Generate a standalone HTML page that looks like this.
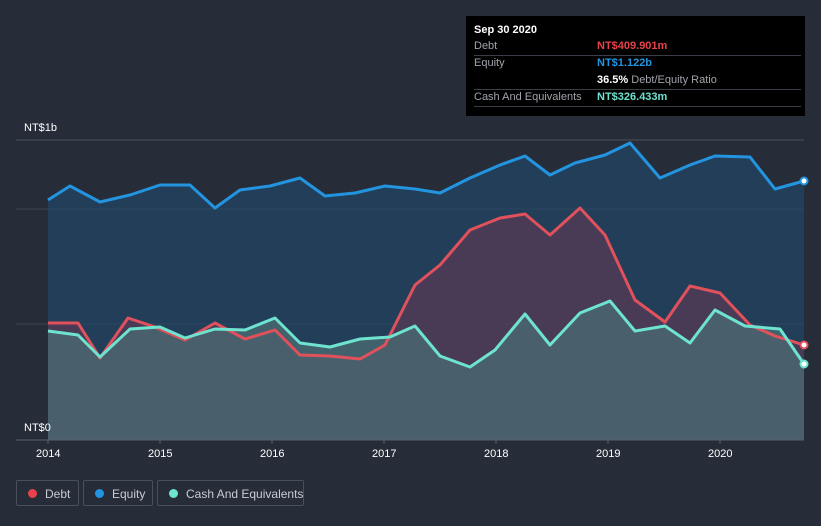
<!DOCTYPE html>
<html><head><meta charset="utf-8"><style>
html,body{margin:0;width:821px;height:526px;overflow:hidden}
body{background:#262d38;font-family:"Liberation Sans",sans-serif;position:relative}
.tt{position:absolute;left:466px;top:16px;width:339px;height:100px;background:#000;color:#fff;font-size:11px}
.tt .r{position:absolute;left:8px;right:4px;border-bottom:1px solid #3a3f47;height:17px;line-height:17px}
.tt .l{color:#a0a4aa;position:absolute;left:0}
.tt .v{position:absolute;left:123px;font-weight:bold;white-space:nowrap}
.leg{position:absolute;top:480px;height:26px;border:1px solid #4a505a;border-radius:2px;color:#c8ccd2;font-size:12px;line-height:26px;box-sizing:border-box;white-space:nowrap}
.leg i{position:absolute;left:11px;top:8px;width:9px;height:9px;border-radius:50%}
.leg span{position:absolute;left:28px}
.ax{position:absolute;color:#fff;font-size:11px}
</style></head><body>
<svg width="821" height="526" style="position:absolute;left:0;top:0">
<line x1="16" y1="140" x2="804" y2="140" stroke="#4a515c"/>
<line x1="16" y1="209" x2="804" y2="209" stroke="#3a424e"/>
<line x1="16" y1="324" x2="804" y2="324" stroke="#3a424e"/>
<polygon fill="#1f4a6e" fill-opacity="0.6" points="48,440 48,200 70,186 100,202 130,195 160,185 190,185 215,208 240,190 270,186 300,178 325,196 355,193 385,186 415,189 440,193 470,178 500,165 525,156 550,175 575,163 605,155 630,143 660,178 690,165 715,156 750,157 775,189 804,181 804,440"/>
<polygon fill="#5a3a55" fill-opacity="0.7" points="48,440 48,323 78,323 100,358 128,318 155,327 185,340 215,323 245,339 275,330 300,355 330,356 360,359 385,345 415,285 440,265 470,230 500,218 525,214 550,235 580,208 605,235 635,300 665,322 690,286 720,293 750,325 775,336 804,345 804,440"/>
<polygon fill="#4a6a72" fill-opacity="0.8" points="48,440 48,331 78,335 100,357 130,329 160,327 185,338 215,329 245,330 275,318 300,343 330,347 360,339 390,337 415,326 440,356 470,367 495,350 525,314 550,345 580,313 610,301 635,331 665,326 690,343 715,310 745,326 780,329 804,364 804,440"/>
<g fill="none" stroke-width="3" stroke-linejoin="round">
<polyline stroke="#2394df" points="48,200 70,186 100,202 130,195 160,185 190,185 215,208 240,190 270,186 300,178 325,196 355,193 385,186 415,189 440,193 470,178 500,165 525,156 550,175 575,163 605,155 630,143 660,178 690,165 715,156 750,157 775,189 804,181"/>
<polyline stroke="#e0515c" points="48,323 78,323 100,358 128,318 155,327 185,340 215,323 245,339 275,330 300,355 330,356 360,359 385,345 415,285 440,265 470,230 500,218 525,214 550,235 580,208 605,235 635,300 665,322 690,286 720,293 750,325 775,336 804,345"/>
<polyline stroke="#6ee3d0" points="48,331 78,335 100,357 130,329 160,327 185,338 215,329 245,330 275,318 300,343 330,347 360,339 390,337 415,326 440,356 470,367 495,350 525,314 550,345 580,313 610,301 635,331 665,326 690,343 715,310 745,326 780,329 804,364"/>
</g>
<circle cx="804" cy="181" r="3.5" fill="#fff" stroke="#2394df" stroke-width="2"/>
<circle cx="804" cy="345" r="3.5" fill="#fff" stroke="#e0515c" stroke-width="2"/>
<circle cx="804" cy="364" r="3.5" fill="#fff" stroke="#6ee3d0" stroke-width="2"/>
<line x1="16" y1="440" x2="804" y2="440" stroke="#5a616c"/>
<g stroke="#5a616c"><line x1="48" y1="440" x2="48" y2="444"/><line x1="160" y1="440" x2="160" y2="444"/><line x1="272" y1="440" x2="272" y2="444"/><line x1="384" y1="440" x2="384" y2="444"/><line x1="496" y1="440" x2="496" y2="444"/><line x1="608" y1="440" x2="608" y2="444"/><line x1="720" y1="440" x2="720" y2="444"/></g>
</svg>
<div class="ax" style="left:24px;top:122px">NT$1b</div>
<div class="ax" style="left:24px;top:422px">NT$0</div>
<div class="ax" style="left:36px;top:448px">2014</div>
<div class="ax" style="left:148px;top:448px">2015</div>
<div class="ax" style="left:260px;top:448px">2016</div>
<div class="ax" style="left:372px;top:448px">2017</div>
<div class="ax" style="left:484px;top:448px">2018</div>
<div class="ax" style="left:596px;top:448px">2019</div>
<div class="ax" style="left:708px;top:448px">2020</div>
<div class="tt">
<div style="position:absolute;left:8px;top:8px;font-weight:bold">Sep 30 2020</div>
<div class="r" style="top:22px"><span class="l">Debt</span><span class="v" style="color:#e8424a">NT$409.901m</span></div>
<div class="r" style="top:39px;border:none"><span class="l">Equity</span><span class="v" style="color:#2394df">NT$1.122b</span></div>
<div class="r" style="top:56px"><span class="v" style="color:#fff">36.5% <span style="font-weight:normal;color:#a0a4aa">Debt/Equity Ratio</span></span></div>
<div class="r" style="top:73px"><span class="l">Cash And Equivalents</span><span class="v" style="color:#6ee3d0">NT$326.433m</span></div>
</div>
<div class="leg" style="left:16px;width:63px"><i style="background:#e8424a"></i><span>Debt</span></div>
<div class="leg" style="left:83px;width:70px"><i style="background:#2394df"></i><span>Equity</span></div>
<div class="leg" style="left:157px;width:147px"><i style="background:#6ee3d0"></i><span>Cash And Equivalents</span></div>
</body></html>
